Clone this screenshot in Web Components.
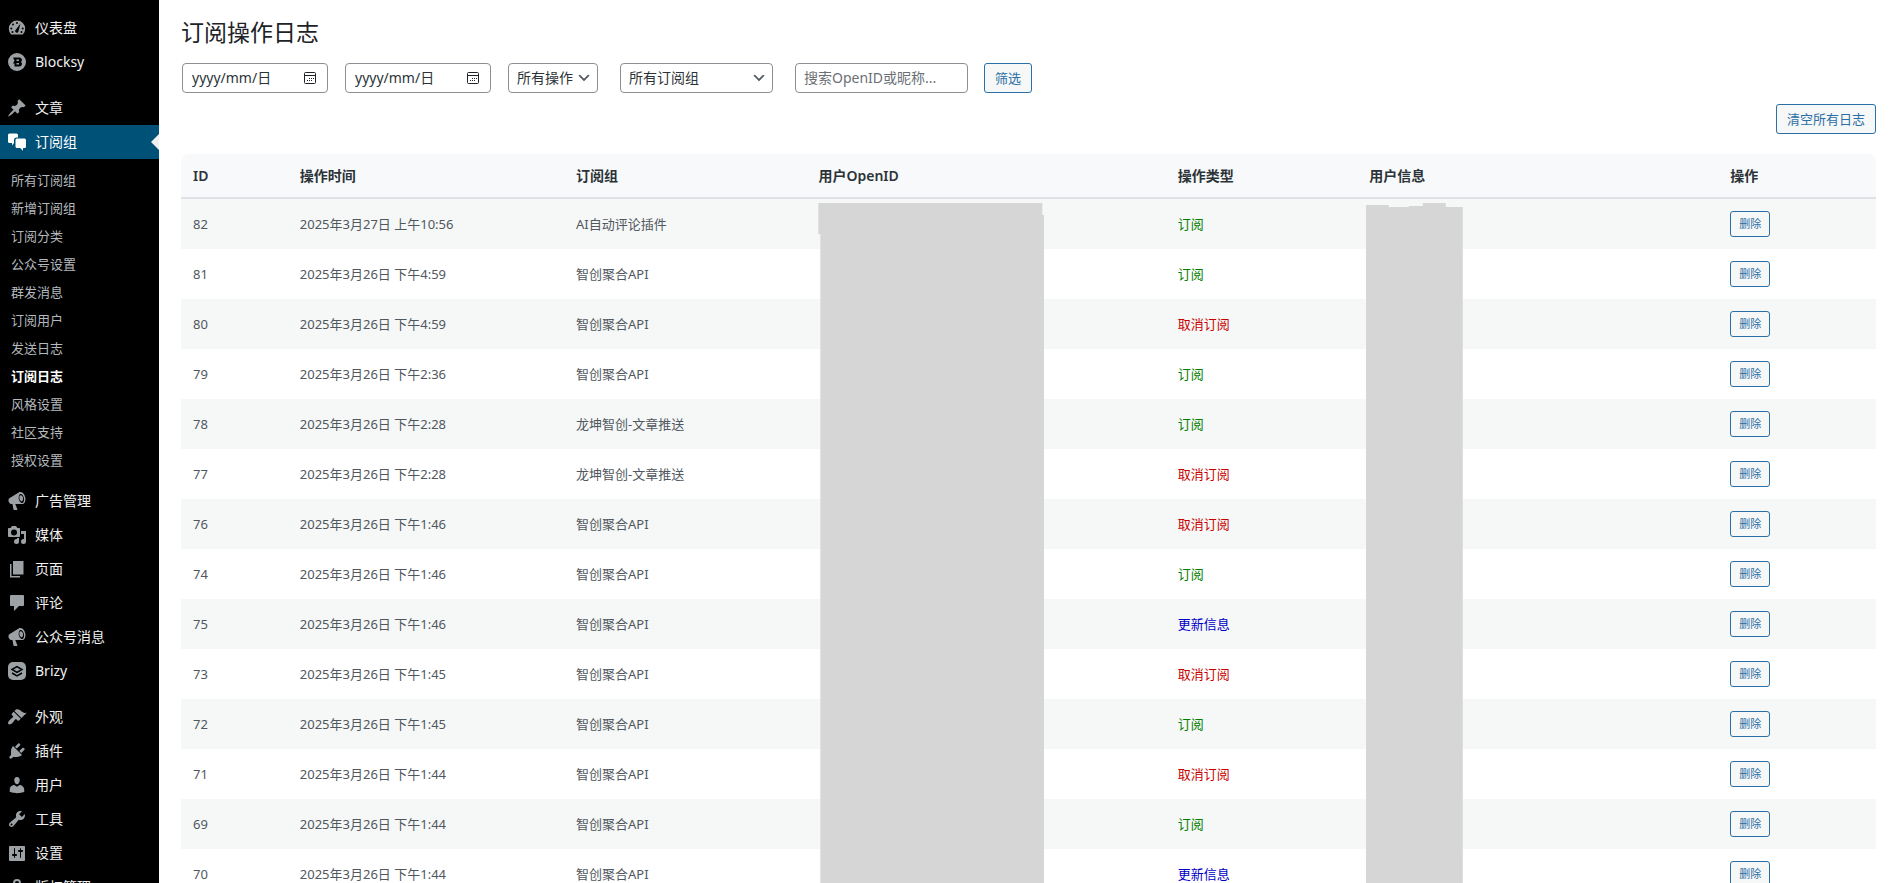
<!DOCTYPE html>
<html lang="zh-CN">
<head>
<meta charset="utf-8">
<title>订阅操作日志</title>
<style>
  html, body{
    margin: 0;
    height: 100%;
  }
  body{
    overflow: hidden;
    background: #fff;
    color: #3c434a;
    font-family: "Noto Sans", "Noto Sans CJK SC", sans-serif;
    font-size: 13px;
  }
</style>
</head>
<body>
<admin-layout>
  <admin-menu slot="menu">
    <menu-item icon="dashboard">仪表盘</menu-item>
    <menu-item icon="blocksy">Blocksy</menu-item>
    <menu-item icon="pin" gap>文章</menu-item>
    <menu-item icon="chat" current>订阅组</menu-item>
    <sub-menu items="所有订阅组,新增订阅组,订阅分类,公众号设置,群发消息,订阅用户,发送日志,订阅日志,风格设置,社区支持,授权设置" current="订阅日志"></sub-menu>
    <menu-item icon="megaphone">广告管理</menu-item>
    <menu-item icon="media">媒体</menu-item>
    <menu-item icon="pages">页面</menu-item>
    <menu-item icon="comment">评论</menu-item>
    <menu-item icon="megaphone">公众号消息</menu-item>
    <menu-item icon="brizy">Brizy</menu-item>
    <menu-item icon="brush" gap>外观</menu-item>
    <menu-item icon="plug">插件</menu-item>
    <menu-item icon="user">用户</menu-item>
    <menu-item icon="wrench">工具</menu-item>
    <menu-item icon="sliders">设置</menu-item>
    <menu-item icon="lock">版权管理</menu-item>
  </admin-menu>
  <log-filter></log-filter>
  <log-table></log-table>
</admin-layout>

<script>
  const icons = {
    dashboard: '<path d="M4.200 16.500A8.200 8.200 0 1 1 15.800 16.500z"/><g fill="#000"><circle cx="10" cy="5" r="1"/><circle cx="6" cy="6.500" r="1"/><circle cx="4.300" cy="10.500" r="1"/><circle cx="15.700" cy="10.500" r="1"/><circle cx="5.500" cy="14" r="1"/><circle cx="14.500" cy="14" r="1"/><path d="M13.500 5.500l-4.700 6.200a1.700 1.700 0 1 0 2.700 1.200z"/></g>',
    blocksy: '<path fill-rule="evenodd" d="M10 1a9 9 0 1 0 0 18 9 9 0 0 0 0-18zM6 5.500h6.500a2.500 2.500 0 0 1 1.500 4.500 2.500 2.500 0 0 1-1.500 4.500H7.500v-3H6L7.500 8.500zM9.500 7.500v1.500h2.500V7.500zM9.500 11v1.500h2.500V11z"/>',
    pin: '<path d="M10.440 3.020l1.820-1.820 6.360 6.350-1.830 1.820c-1.050-.680-2.480-.570-3.410.360l-.750.750c-.920.930-1.040 2.350-.350 3.410l-1.830 1.820-2.410-2.410-2.800 2.790c-.420.420-3.380 2.710-3.800 2.290s1.860-3.390 2.280-3.810l2.790-2.790L4.100 9.360l1.830-1.820c1.050.690 2.480.570 3.400-.360l.750-.750c.930-.920 1.050-2.350.360-3.410z"/>',
    chat: '<path d="M2.500 1.500h7a1.500 1.500 0 0 1 1.500 1.500v2.500H9.500A2.500 2.500 0 0 0 7 8v3l-2 2.500V11H2.500A1.500 1.500 0 0 1 1 9.500V3a1.500 1.500 0 0 1 1.500-1.500zM10 6.500h7.500A1.500 1.500 0 0 1 19 8v6.500a1.500 1.500 0 0 1-1.500 1.500H16v2.800L13.200 16H10a1.500 1.500 0 0 1-1.500-1.500V8A1.500 1.500 0 0 1 10 6.500z"/>',
    megaphone: '<path fill-rule="evenodd" d="M18.150 5.940c.460 1.620.380 3.220-.020 4.480-.420 1.280-1.260 2.180-2.300 2.480-.160.060-.260.060-.400.060-.060.020-.120.020-.180.020-.060.020-.140.020-.220.020h-6.800l2.220 5.500c.020.140-.060.260-.140.340-.080.100-.240.160-.340.160H6.950c-.100 0-.260-.060-.340-.160-.080-.080-.160-.200-.140-.340l-1-5.500H4.250l-.020-.020c-.500.060-1.080-.180-1.540-.620s-.880-1.080-1.060-1.880c-.240-.800-.200-1.560-.020-2.200.180-.620.580-1.080 1.060-1.300l.020-.020 9-5.400c.100-.060.180-.100.240-.160.060-.040.140-.080.240-.120.160-.080.280-.120.500-.180 1.040-.300 2.240.100 3.220.980s1.840 2.240 2.260 3.860zm-2.580 5.980c.420-.180.800-.580 1.080-1.180.500-1.200.600-2.700.160-4.300-.420-1.560-1.300-2.700-2.280-3.260-.500-.240-.960-.300-1.340-.160-.440.160-.800.580-1.060 1.180-.500 1.200-.600 2.740-.160 4.300.440 1.560 1.300 2.700 2.280 3.260.500.240.920.300 1.320.160zm.340-5.500c.200.900.180 1.800 0 2.500-.200.700-.600 1.200-1.100 1.300-.900.240-1.900-.800-2.300-2.400-.400-1.700-.100-3.200.900-3.500.900-.240 2.100.700 2.500 2.100z"/>',
    media: '<path fill-rule="evenodd" d="M13 11V4c0-.550-.450-1-1-1h-1.670L9 1H5L3.670 3H2c-.550 0-1 .450-1 1v7c0 .550.450 1 1 1h10c.550 0 1-.450 1-1zM7 4.500a3 3 0 1 1 0 6 3 3 0 0 1 0-6zM14 6h5v10.500a2.500 2.500 0 1 1-2.500-2.500c.170 0 .340.020.500.050V9h-3zm-4 8.050V13h2v3.500a2.500 2.500 0 1 1-2.500-2.500c.170 0 .340.020.500.050z"/>',
    pages: '<path d="M6 2h10.500v13.500H6zM3 5h1.500v12H13v1.500H3z"/>',
    comment: '<path d="M4 2h12a1 1 0 0 1 1 1v9a1 1 0 0 1-1 1h-4l-5 5V13H4a1 1 0 0 1-1-1V3a1 1 0 0 1 1-1z"/>',
    brizy: '<rect x="1" y="1" width="18" height="18" rx="5"/><path d="M5 8.500l5-3 5 3-5 3zM5 12l5 3 5-3" fill="none" stroke="#000" stroke-width="1.500"/>',
    brush: '<path d="M14.480 11.060L7.410 3.990l1.500-1.500c.500-.560 2.300-.470 3.510.320 1.210.800 1.430 1.280 2.910 2.100 1.180.640 2.450 1.260 4.450.850zm-.710.710L6.700 4.700 4.930 6.470c-.390.390-.390 1.020 0 1.410l1.060 1.060c.390.390.390 1.030 0 1.420-.600.600-1.430 1.110-2.210 1.690-.350.260-.700.530-1.010.840C1.430 14.230.400 16.080 1.400 17.070c.990 1 2.840-.030 4.180-1.360.310-.310.580-.660.850-1.020.570-.780 1.080-1.610 1.690-2.210.390-.390 1.020-.390 1.410 0l1.060 1.060c.390.390 1.020.390 1.410 0z"/>',
    plug: '<path d="M13.110 4.360L9.870 7.600 8 5.730l3.240-3.240c.350-.340 1.050-.200 1.560.320.520.510.660 1.210.310 1.550zm-8 1.770l.910-1.120 9.010 9.010-1.190.840c-.710.710-2.630 1.160-3.820 1.160H6.140L4.900 17.260c-.590.590-1.540.590-2.120 0-.590-.580-.590-1.530 0-2.120l1.240-1.240v-3.880c0-1.130.400-3.190 1.090-3.890zm7.260 3.970l3.240-3.240c.340-.350 1.040-.210 1.550.310.520.510.660 1.210.310 1.550l-3.240 3.250z"/>',
    user: '<path d="M10 9.250c-2.270 0-2.730-3.440-2.730-3.440C7 4.020 7.820 2 9.970 2c2.160 0 2.980 2.020 2.710 3.810 0 0-.410 3.440-2.680 3.440zm0 2.570L12.720 10c2.390 0 4.520 2.330 4.520 4.530v2.490s-3.650 1.130-7.240 1.130c-3.650 0-7.240-1.130-7.240-1.130v-2.490c0-2.250 1.940-4.480 4.470-4.480z"/>',
    wrench: '<path d="M16.680 9.770c-1.340 1.340-3.300 1.670-4.950.990l-5.410 6.520c-.990.990-2.590.990-3.580 0s-.990-2.590 0-3.570l6.520-5.420c-.680-1.650-.350-3.610.990-4.950 1.280-1.280 3.120-1.620 4.720-1.060l-2.890 2.890 2.820 2.820 2.860-2.870c.530 1.580.180 3.390-1.080 4.650zM3.810 16.210c.400.390 1.040.390 1.430 0 .400-.400.400-1.040 0-1.430-.390-.400-1.030-.400-1.430 0-.390.390-.390 1.030 0 1.430z"/>',
    sliders: '<path fill-rule="evenodd" d="M18 16V4c0-.550-.450-1-1-1H3c-.550 0-1 .450-1 1v13c0 .550.450 1 1 1h14c.550 0 1-.450 1-1zM8 11h1c.550 0 1 .450 1 1s-.450 1-1 1H8v1.500c0 .280-.220.500-.500.500s-.500-.220-.500-.500V13H6c-.550 0-1-.450-1-1s.450-1 1-1h1V5.500c0-.280.220-.500.500-.500s.500.220.500.500zm5-2h-1c-.550 0-1-.450-1-1s.450-1 1-1h1V5.500c0-.280.220-.500.500-.500s.500.220.500.500V7h1c.550 0 1 .450 1 1s-.450 1-1 1h-1v5.500c0 .280-.220.500-.500.500s-.500-.220-.500-.500z"/>',
    lock: '<path fill-rule="evenodd" d="M6 10V6a4 4 0 0 1 8 0v4h2v8H4v-8zM8 10h4V6a2 2 0 0 0-4 0z"/>'
  };

  class BaseElement extends HTMLElement {
    connectedCallback(){
      const shadow = this.attachShadow({mode: "open"});
      shadow.innerHTML = this.render();
    }
  }

  class AdminLayout extends BaseElement {
    render(){
      return `
        <style>
          :host{
            display: flex;
            height: 100vh;
            overflow: hidden;
          }
          aside{
            flex: 0 0 159px;
            background: #000;
          }
          main{
            flex: 1;
            min-width: 0;
            padding: 16px 18px 0 22px;
          }
          h1{
            margin: 0;
            font-size: 23px;
            font-weight: 400;
            line-height: 32px;
            color: #1d2327;
          }
        </style>
        <aside><slot name="menu"></slot></aside>
        <main>
          <h1>订阅操作日志</h1>
          <slot></slot>
        </main>`;
    }
  }

  class AdminMenu extends BaseElement {
    render(){
      return `
        <style>
          :host{
            display: block;
            padding-top: 11px;
          }
        </style>
        <nav><slot></slot></nav>`;
    }
  }

  class MenuItem extends BaseElement {
    render(){
      return `
        <style>
          :host{
            display: block;
          }
          :host([gap]){
            margin-top: 12px;
          }
          a{
            display: flex;
            align-items: center;
            gap: 8px;
            height: 34px;
            padding-left: 7px;
            font-size: 14px;
            line-height: 18px;
            color: #f0f0f1;
            text-decoration: none;
            white-space: nowrap;
          }
          svg{
            width: 20px;
            height: 20px;
            fill: #9ca1a6;
          }
          :host([current]) a{
            background: #005177;
            color: #fff;
          }
          :host([current]) svg{
            fill: #fff;
          }
          :host([current]) a::after{
            content: "";
            margin-left: auto;
            border: 8px solid transparent;
            border-right-color: #f0f0f1;
            border-left: 0;
          }
        </style>
        <a href="#"><svg viewBox="0 0 20 20" aria-hidden="true">${icons[this.getAttribute("icon")]}</svg><slot></slot></a>`;
    }
  }

  class SubMenu extends BaseElement {
    render(){
      const current = this.getAttribute("current");
      const links = this.getAttribute("items").split(",").map(name =>
        `<li><a href="#"${name === current ? ' class="current"' : ""}>${name}</a></li>`
      ).join("");
      return `
        <style>
          :host{
            display: block;
            padding: 7px 0 10px;
          }
          ul{
            margin: 0;
            padding: 0;
            list-style: none;
          }
          a{
            display: block;
            padding-left: 11px;
            font-size: 13px;
            line-height: 28px;
            color: #b4b9be;
            text-decoration: none;
          }
          .current{
            color: #fff;
            font-weight: 600;
          }
        </style>
        <ul>${links}</ul>`;
    }
  }

  class DateField extends BaseElement {
    render(){
      return `
        <style>
          :host{
            display: block;
          }
          .box{
            display: flex;
            align-items: center;
            box-sizing: border-box;
            width: 146px;
            height: 30px;
            padding: 0 10px 0 9px;
            border: 1px solid #8c8f94;
            border-radius: 4px;
            background: #fff;
          }
          input{
            flex: 1;
            min-width: 0;
            padding: 0 0 2px;
            border: 0;
            outline: 0;
            background: none;
            font: inherit;
            font-size: 14px;
            color: #2c3338;
          }
          input::placeholder{
            color: #2c3338;
            opacity: 1;
          }
          svg{
            flex: none;
            width: 14px;
            height: 14px;
          }
        </style>
        <label class="box">
          <input type="text" placeholder="yyyy/mm/日" aria-label="${this.getAttribute("label")}">
          <svg viewBox="0 0 14 14" aria-hidden="true">
            <rect x="1.500" y="1.500" width="11" height="11" rx="1" fill="none" stroke="#1d2327"/>
            <path d="M1.500 4.500h11" stroke="#1d2327"/>
            <path d="M6 7h1v1H6zM8 7h1v1H8zM10 7h1v1h-1zM4 9h1v1H4zM6 9h1v1H6zM8 9h1v1H8z" fill="#1d2327"/>
          </svg>
        </label>`;
    }
  }

  const buttonStyle = `
    button{
      box-sizing: border-box;
      height: 30px;
      padding: 0 10px;
      border: 1px solid #2a6fa5;
      border-radius: 3px;
      background: #f6f7f7;
      font: inherit;
      font-size: 13px;
      line-height: 16px;
      color: #2a6fa5;
      white-space: nowrap;
    }`;

  class LogFilter extends BaseElement {
    render(){
      return `
        <style>
          :host{
            display: block;
          }
          form{
            display: flex;
            align-items: center;
            padding: 15px 0 0 1px;
          }
          date-field{
            margin-right: 17px;
          }
          select, .search{
            box-sizing: border-box;
            height: 30px;
            padding: 0 8px 2px;
            border: 1px solid #8c8f94;
            border-radius: 4px;
            background-color: #fff;
            font: inherit;
            font-size: 14px;
            color: #2c3338;
          }
          select{
            appearance: none;
            background-image: url('data:image/svg+xml,<svg xmlns="http://www.w3.org/2000/svg" viewBox="0 0 20 20"><path d="M5 6l5 5 5-5 2 1-7 7-7-7z" fill="%2350575e"/></svg>');
            background-repeat: no-repeat;
            background-position: right 5px center;
            background-size: 16px 16px;
          }
          .action{
            width: 90px;
            margin-right: 22px;
          }
          .group{
            width: 153px;
            margin-right: 22px;
          }
          .search{
            width: 173px;
            margin-right: 16px;
          }
          .search::placeholder{
            color: #6c7075;
            opacity: 1;
          }
          .tools{
            display: flex;
            justify-content: flex-end;
            padding: 11px 0 20px;
          }
          ${buttonStyle}
        </style>
        <form>
          <date-field label="开始日期"></date-field>
          <date-field label="结束日期"></date-field>
          <select class="action" aria-label="操作"><option>所有操作</option></select>
          <select class="group" aria-label="订阅组"><option>所有订阅组</option></select>
          <input class="search" type="text" placeholder="搜索OpenID或昵称..." aria-label="搜索">
          <button type="button">筛选</button>
        </form>
        <div class="tools"><button type="button">清空所有日志</button></div>`;
    }
  }

  const types = {
    on: "订阅",
    off: "取消订阅",
    update: "更新信息"
  };
  const api = "智创聚合API";
  const push = "龙坤智创-文章推送";
  const logs = [
    [82, "2025年3月27日 上午10:56", "AI自动评论插件", "on"],
    [81, "2025年3月26日 下午4:59", api, "on"],
    [80, "2025年3月26日 下午4:59", api, "off"],
    [79, "2025年3月26日 下午2:36", api, "on"],
    [78, "2025年3月26日 下午2:28", push, "on"],
    [77, "2025年3月26日 下午2:28", push, "off"],
    [76, "2025年3月26日 下午1:46", api, "off"],
    [74, "2025年3月26日 下午1:46", api, "on"],
    [75, "2025年3月26日 下午1:46", api, "update"],
    [73, "2025年3月26日 下午1:45", api, "off"],
    [72, "2025年3月26日 下午1:45", api, "on"],
    [71, "2025年3月26日 下午1:44", api, "off"],
    [69, "2025年3月26日 下午1:44", api, "on"],
    [70, "2025年3月26日 下午1:44", api, "update"]
  ];

  class LogTable extends BaseElement {
    render(){
      const rows = logs.map(([id, time, group, type]) => `
        <tr>
          <td>${id}</td>
          <td>${time}</td>
          <td>${group}</td>
          <td></td>
          <td class="${type}">${types[type]}</td>
          <td></td>
          <td><button type="button">删除</button></td>
        </tr>`).join("");
      return `
        <style>
          :host{
            display: block;
            position: relative;
            overflow: hidden;
            border-radius: 8px;
          }
          table{
            width: 100%;
            table-layout: fixed;
            border-collapse: separate;
            border-spacing: 0;
          }
          th, td{
            box-sizing: border-box;
            padding: 0 12px;
            text-align: left;
            white-space: nowrap;
          }
          th{
            height: 45px;
            padding-bottom: 1px;
            border-bottom: 2px solid #dee2e6;
            background: #f8f9fa;
            font-size: 14px;
            font-weight: 600;
            color: #2c3338;
          }
          td{
            height: 50px;
            font-size: 13px;
            line-height: 20px;
            color: #50575e;
          }
          tbody tr:nth-child(odd){
            background: #f6f7f7;
          }
          td.on{
            color: #008000;
          }
          td.off{
            color: #c80000;
          }
          td.update{
            color: #0000c8;
          }
          ${buttonStyle}
          button{
            display: block;
            height: 26px;
            padding: 0 8px;
            font-size: 11px;
          }
          /* masks over the private columns */
          .mask{
            position: absolute;
            bottom: 0;
            background: #d6d6d6;
          }
          .openid{
            top: 49px;
            left: 37.6%;
            width: 226px;
            clip-path: polygon(0 0, 224px 0, 224px 12px, 100% 12px, 100% 100%, 2px 100%, 2px 31px, 0 31px);
          }
          .info{
            top: 49px;
            left: 69.9%;
            width: 97px;
            clip-path: polygon(0 2px, 23px 2px, 23px 4px, 43px 4px, 43px 3px, 57px 3px, 57px 0, 80px 0, 80px 4px, 100% 4px, 100% 100%, 0 100%);
          }
        </style>
        <table>
          <colgroup>
            <col style="width: 6.3%">
            <col style="width: 16.3%">
            <col style="width: 14.3%">
            <col style="width: 21.2%">
            <col style="width: 11.3%">
            <col style="width: 21.3%">
            <col>
          </colgroup>
          <thead>
            <tr>
              <th>ID</th>
              <th>操作时间</th>
              <th>订阅组</th>
              <th>用户OpenID</th>
              <th>操作类型</th>
              <th>用户信息</th>
              <th>操作</th>
            </tr>
          </thead>
          <tbody>${rows}</tbody>
        </table>
        <div class="mask openid"></div>
        <div class="mask info"></div>`;
    }
  }

  customElements.define("admin-layout", AdminLayout);
  customElements.define("admin-menu", AdminMenu);
  customElements.define("menu-item", MenuItem);
  customElements.define("sub-menu", SubMenu);
  customElements.define("date-field", DateField);
  customElements.define("log-filter", LogFilter);
  customElements.define("log-table", LogTable);
</script>
</body>
</html>
